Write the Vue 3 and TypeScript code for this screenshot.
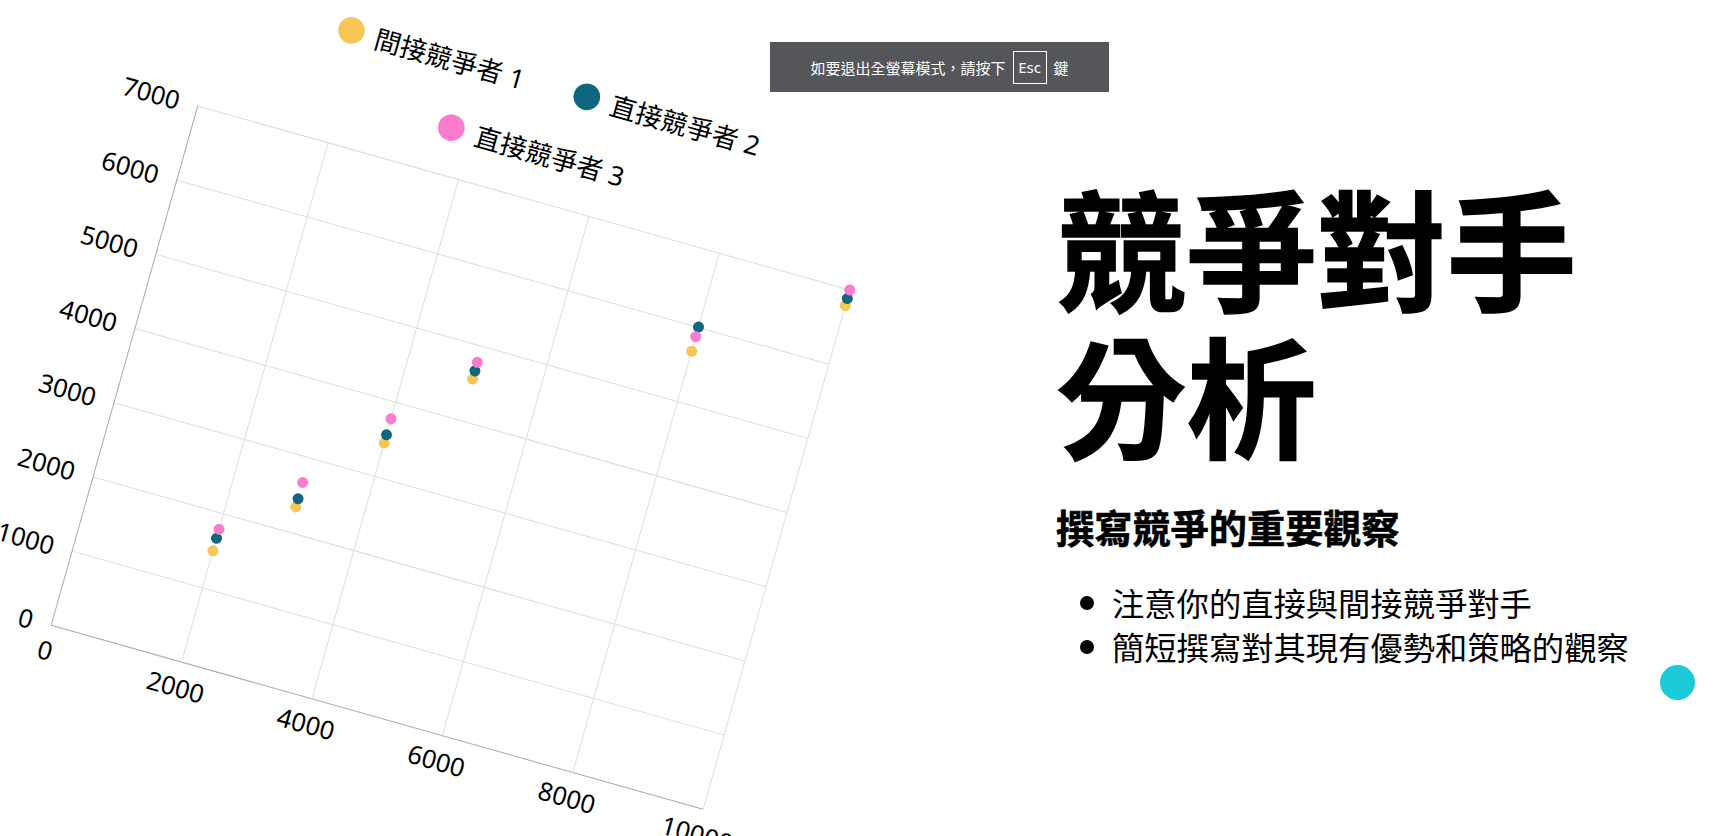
<script setup lang="ts">
const W = 677.5
const H = 539.6
const xTicks = [0, 2000, 4000, 6000, 8000, 10000]
const yTicks = [0, 1000, 2000, 3000, 4000, 5000, 6000, 7000]
const sx = (v: number) => (v / 10000) * W
const sy = (v: number) => H - (v / 7000) * H

const series = [
  { name: '間接競爭者 1', cls: 'yellow', lx: 127.5, ly: -114.5, data: [[2000, 1500], [3000, 2340], [4000, 3450], [5000, 4560], [8000, 5680], [10000, 6790]] },
  { name: '直接競爭者 2', cls: 'blue', lx: 372, ly: -114.5, data: [[2000, 1670], [3000, 2450], [4000, 3560], [5000, 4670], [8000, 6005], [10000, 6885]] },
  { name: '直接競爭者 3', cls: 'pink', lx: 250, ly: -48, data: [[2000, 1790], [3000, 2670], [4000, 3775], [5000, 4785], [8000, 5875], [10000, 7000]] },
]
const points = ['注意你的直接與間接競爭對手', '簡短撰寫對其現有優勢和策略的觀察']
</script>

<template>
  <div class="page">
    <div class="chart-col">
      <svg class="chart" viewBox="0 0 1055 836" width="1055" height="836">
        <g transform="translate(197.7 106) rotate(15.76)">
          <g v-for="t in yTicks" :key="'y' + t">
            <line :class="t === 0 ? 'axis' : 'grid'" x1="0" :x2="W" :y1="sy(t)" :y2="sy(t)" />
            <text class="tick" x="-19" :y="sy(t) + 9.5" text-anchor="end">{{ t }}</text>
          </g>
          <g v-for="t in xTicks" :key="'x' + t">
            <line :class="t === 0 ? 'axis' : 'grid'" :x1="sx(t)" :x2="sx(t)" y1="0" :y2="H" />
            <text class="tick" :x="sx(t) + 1" :y="H + 35" text-anchor="middle">{{ t }}</text>
          </g>
          <g v-for="s in series" :key="s.name">
            <circle v-for="p in s.data" :key="p[0]" :class="s.cls" :cx="sx(p[0])" :cy="sy(p[1])" r="5.5" />
            <circle :class="s.cls" :cx="s.lx" :cy="s.ly" r="13.3" />
            <text class="legend" :x="s.lx + 25" :y="s.ly + 11">{{ s.name }}</text>
          </g>
        </g>
      </svg>
    </div>

    <div class="text-col">
      <h1 class="title">競爭對手分析</h1>
      <h2 class="subtitle">撰寫競爭的重要觀察</h2>
      <ul class="list">
        <li v-for="p in points" :key="p" class="item">{{ p }}</li>
      </ul>
    </div>

    <div class="notice">
      <span>如要退出全螢幕模式&#xFF0C;請按下</span>
      <span class="key">Esc</span>
      <span>鍵</span>
    </div>
    <div class="dot"></div>
  </div>
</template>

<style scoped>
.page {
  position: relative;
  display: flex;
  width: 1715px;
  height: 836px;
  overflow: hidden;
  background: #fff;
  color: #000;
  font-family: "Noto Sans", "Noto Sans CJK TC", sans-serif;
}
.chart-col {
  flex: none;
  width: 1055px;
}
.chart {
  display: block;
  overflow: hidden;
}
.grid {
  stroke: #ddd;
  stroke-width: 1;
}
.axis {
  stroke: #aaa;
  stroke-width: 1;
}
.tick {
  font-size: 25.5px;
  fill: #000;
}
.legend {
  font-size: 26.5px;
  fill: #000;
}
.yellow { fill: #f7c655; }
.blue { fill: #0f6680; }
.pink { fill: #f97ccf; }

.text-col {
  flex: 1;
  padding-top: 177px;
}
.title {
  margin: 0 0 0 1.5px;
  max-width: 540px;
  font-size: 130px;
  line-height: 147px;
  font-weight: 700;
  -webkit-text-stroke: 1.5px #000;
}
.subtitle {
  margin: 32px 0 0 1px;
  font-size: 38.2px;
  line-height: 50px;
  font-weight: 700;
  -webkit-text-stroke: 0.6px #000;
}
.list {
  margin: 28px 0 0;
  padding: 0 0 0 24.6px;
  list-style: none;
  font-size: 32.3px;
  line-height: 44px;
}
.item {
  display: flex;
  align-items: center;
  gap: 18.4px;
}
.item::before {
  content: "";
  flex: none;
  width: 14px;
  height: 14px;
  border-radius: 50%;
  background: #000;
}
.notice {
  position: absolute;
  left: 770px;
  top: 42px;
  width: 339px;
  height: 50px;
  display: flex;
  align-items: center;
  justify-content: center;
  gap: 7px;
  background: #54565a;
  color: #fff;
  font-size: 15px;
}
.key {
  display: flex;
  align-items: center;
  justify-content: center;
  width: 34px;
  height: 33px;
  box-sizing: border-box;
  border: 1px solid #fff;
}
.dot {
  position: absolute;
  left: 1659.5px;
  top: 664.5px;
  width: 35px;
  height: 35px;
  border-radius: 50%;
  background: #1ccad8;
}
</style>
